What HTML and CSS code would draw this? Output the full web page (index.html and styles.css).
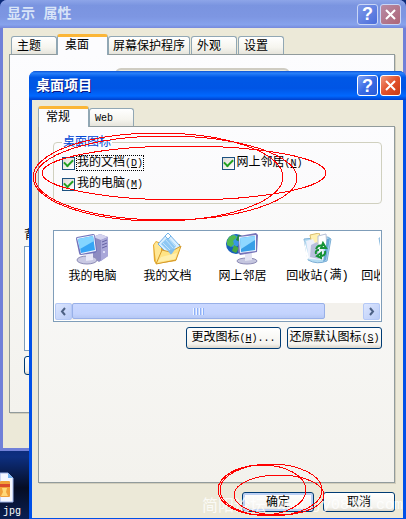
FILE: index.html
```html
<!DOCTYPE html>
<html lang="zh-CN">
<head>
    <meta charset="UTF-8">
    <meta name="viewport" content="width=device-width, initial-scale=1.0">
    <title>显示 属性</title>
    <link rel="stylesheet" href="styles.css">
</head>
<body>
<div class="desktop">
    <div class="desktop-file">
        <svg width="14" height="31" viewBox="0 0 14 31">
            <path d="M0 1H8L13 6V30H0Z" fill="#f4f7ff" stroke="#9db4ea"/>
            <path d="M8 1V6H13Z" fill="#79b4ef"/>
            <rect x="0" y="9" width="10" height="16" rx="1" fill="#f0a03a"/>
            <rect x="0" y="12" width="10" height="3" fill="#d9482b"/>
            <path d="M2 16H7L6 20L8 24H1L3 20Z" fill="#ffd878"/>
        </svg>
        <span>jpg</span>
    </div>

    <!-- Свойства экрана -->
    <section class="window window-back">
        <header class="titlebar">
            <h1>显示 属性</h1>
            <button class="title-btn" type="button" aria-label="帮助">?</button>
            <button class="title-btn close" type="button" aria-label="关闭">
                <svg width="13" height="13" viewBox="0 0 13 13"><path d="M2 2L11 11M11 2L2 11"/></svg>
            </button>
        </header>
        <div class="window-body">
            <nav class="tabs">
                <button class="tab" type="button">主题</button>
                <button class="tab active" type="button">桌面</button>
                <button class="tab" type="button">屏幕保护程序</button>
                <button class="tab" type="button">外观</button>
                <button class="tab" type="button">设置</button>
            </nav>
            <div class="panel">
                <div class="monitor"></div>
                <div class="background-label">背景</div>
                <div class="background-list"></div>
                <button class="btn" type="button" aria-label="自定义桌面"></button>
            </div>
        </div>
    </section>

    <!-- Элементы рабочего стола -->
    <section class="window window-front">
        <header class="titlebar">
            <h2>桌面项目</h2>
            <button class="title-btn" type="button" aria-label="帮助">?</button>
            <button class="title-btn close" type="button" aria-label="关闭">
                <svg width="13" height="13" viewBox="0 0 13 13"><path d="M2 2L11 11M11 2L2 11"/></svg>
            </button>
        </header>
        <div class="window-body">
            <nav class="tabs">
                <button class="tab active" type="button">常规</button>
                <button class="tab" type="button"><span class="key">Web</span></button>
            </nav>
            <div class="panel">
                <fieldset class="group">
                    <legend>桌面图标</legend>
                    <div class="checks">
                        <div class="check">
                            <input type="checkbox" id="docs" checked>
                            <label class="focused" for="docs">我的文档<span class="key">(<u>D</u>)</span></label>
                        </div>
                        <div class="check">
                            <input type="checkbox" id="network" checked>
                            <label for="network">网上邻居<span class="key">(<u>N</u>)</span></label>
                        </div>
                        <div class="check">
                            <input type="checkbox" id="computer" checked>
                            <label for="computer">我的电脑<span class="key">(<u>M</u>)</span></label>
                        </div>
                    </div>
                </fieldset>

                <div class="icon-box">
                    <ul class="icon-list">
                        <li>
                            <svg width="32" height="32" viewBox="0 0 32 32">
                                <path d="M17 4L24 1L32 4V23L23 29L17 25Z" fill="#8d8cc2"/>
                                <path d="M17 4L24 1L32 4L25 7Z" fill="#d4d3ef"/>
                                <path d="M25 7L32 4V23L25 28Z" fill="#a9a7d9"/>
                                <path d="M26 9L31 7M26 12L31 10M26 15L31 13" stroke="#6562a4"/>
                                <circle cx="28" cy="19" r="1" fill="#eeeeff"/>
                                <ellipse cx="11" cy="27" rx="10" ry="4" fill="#c9c9e3" stroke="#8c8bb5"/>
                                <path d="M10 20L17 19L17 27L10 28Z" fill="#e8e8f7"/>
                                <path d="M1 4L17 1Q19 1 19 3L21 17Q21 19 19 20L5 22Q3 22 3 20L0 6Q0 4 1 4Z" fill="#7073bb"/>
                                <path d="M1 5L18 2L20 18L5 21Z" fill="#eff5ff"/>
                                <path d="M2 6L17 3L19 17L5 20Z" fill="#36a5f5"/>
                                <path d="M2 6L17 3L18 8L4 16Z" fill="#83d5ff"/>
                            </svg>
                            我的电脑
                        </li>
                        <li>
                            <svg width="32" height="32" viewBox="0 0 32 32">
                                <path d="M2 12L5 8L10 10L29 11L25 28L5 31L3 28Z" fill="#e5a92d"/>
                                <path d="M3 12L5 9L10 11V24L5 30Z" fill="#ffe795"/>
                                <path d="M17 0L29 13L20 24L7 11Z" fill="#d9efff" stroke="#72aee6"/>
                                <path d="M17 4L25 13L19 20L10 11Z" fill="#8ec7f3"/>
                                <path d="M15 7L22 15M12 10L19 17M18 6L24 13" stroke="#c2e3fb"/>
                                <path d="M17 0L20 3L17 6L14 3Z" fill="#ffffff" stroke="#73b6ea"/>
                                <path d="M5 31L11 17L19 19L30 13L25 27Z" fill="#ffe486" stroke="#d69b2b"/>
                                <path d="M17 18L25 15L20 22Z" fill="#80bce9"/>
                                <path d="M10 24L26 20L24 26L7 29Z" fill="#fff0ae"/>
                            </svg>
                            我的文档
                        </li>
                        <li>
                            <svg width="32" height="32" viewBox="0 0 32 32">
                                <circle cx="10" cy="11" r="10" fill="#1760ba"/>
                                <circle cx="8" cy="8" r="6" fill="#3796e5"/>
                                <path d="M1 8Q3 2 8 2L11 4L7 8L8 11L5 14L1 12Z" fill="#51b950"/>
                                <path d="M12 2L17 3L20 8L14 9L10 7Z" fill="#218c39"/>
                                <path d="M8 12L13 15L10 20L6 18Z" fill="#48a741"/>
                                <ellipse cx="21" cy="28" rx="10" ry="3" fill="#c5c6df" stroke="#8c8bb5"/>
                                <path d="M19 20L26 20V27L19 28Z" fill="#e3e3f2"/>
                                <path d="M13 3L30 0L32 2L31 19L14 22L12 19Z" fill="#7774b9"/>
                                <path d="M13 4L30 2V18L14 20Z" fill="#eaf4ff"/>
                                <path d="M14 5L29 3V17L15 19Z" fill="#389fe7"/>
                                <path d="M14 5L29 3V7L15 16Z" fill="#8fd8ff"/>
                            </svg>
                            网上邻居
                        </li>
                        <li>
                            <svg width="32" height="32" viewBox="0 0 32 32">
                                <path d="M3 6L27 4L30 6L26 28Q16 32 7 27Z" fill="#b4dcf2" stroke="#7caed5"/>
                                <path d="M9 2L18 0L21 9L11 12Z" fill="#fff1b1" stroke="#d9bd70"/>
                                <path d="M17 3L25 1L26 14L17 15Z" fill="#ffffff" stroke="#b6bfd6"/>
                                <path d="M5 8L12 6L16 14L22 10L23 27L8 26Z" fill="#edf1fc"/>
                                <path d="M10 12L16 9L18 26L9 24Z" fill="#b9bfdd"/>
                                <path d="M3 6L8 24L7 27Q5 25 5 21Z" fill="#ffffff"/>
                                <path d="M26 6L29 5L25 27L22 29Z" fill="#6ba8d4"/>
                                <path d="M15 16Q17 11 22 13M22 10L25 15H20ZM15 21Q14 17 18 17M24 18Q25 23 19 23M20 20V25L16 23Z" fill="none" stroke="#159235" stroke-width="2"/>
                            </svg>
                            回收站<span class="key">(满)</span>
                        </li>
                        <li>
                            <svg width="32" height="32" viewBox="0 0 32 32">
                                <path d="M3 5L27 3L30 6L26 28Q16 32 7 27Z" fill="#c7e5f6" stroke="#87b9df"/>
                                <path d="M4 6L27 5L23 9L7 10Z" fill="#f2faff"/>
                            </svg>
                            回收站<span class="key">(空)</span>
                        </li>
                    </ul>
                    <div class="scrollbar">
                        <button class="scroll-btn" type="button" aria-label="向左">
                            <svg width="9" height="9" viewBox="0 0 9 9"><path d="M6 1L3 4.500L6 8"/></svg>
                        </button>
                        <div class="scroll-track">
                            <div class="scroll-thumb"><i></i><i></i><i></i><i></i></div>
                        </div>
                        <button class="scroll-btn" type="button" aria-label="向右">
                            <svg width="9" height="9" viewBox="0 0 9 9"><path d="M3 1L6 4.500L3 8"/></svg>
                        </button>
                    </div>
                </div>

                <div class="icon-actions">
                    <button class="btn" type="button">更改图标<span class="key">(<u>H</u>)...</span></button>
                    <button class="btn" type="button">还原默认图标<span class="key">(<u>S</u>)</span></button>
                </div>
            </div>
            <footer class="dialog-actions">
                <button class="btn default" type="button">确定</button>
                <button class="btn" type="button">取消</button>
            </footer>
        </div>
    </section>

    <div class="watermark"><span>简阳论坛</span><span class="site">www.jy0832.com</span></div>

    <svg class="marks" width="406" height="519" viewBox="0 0 406 519">
        <ellipse cx="158" cy="177" rx="125" ry="44"/>
        <ellipse cx="166" cy="178" rx="131" ry="42"/>
        <ellipse cx="184" cy="173" rx="142" ry="27"/>
        <ellipse cx="262" cy="490" rx="44" ry="25"/>
        <ellipse cx="271" cy="490" rx="51" ry="26"/>
        <ellipse cx="279" cy="495" rx="45" ry="20"/>
    </svg>
</div>
</body>
</html>
```
FILE: styles.css
```css
:root {
    --face: #ece9d8;
    --line: #919b9c;
    --field: #7f9db9;
    --navy: #003c74;
}

* {
    box-sizing: border-box;
}

body {
    margin: 0;
    font-family: "Liberation Sans", "Noto Sans CJK SC", sans-serif;
    font-size: 12px;
    line-height: 14px;
    color: #000;
}

h1, h2, ul {
    margin: 0;
    padding: 0;
}

button {
    font: inherit;
    color: inherit;
    padding: 0;
}

.key {
    font-family: "Liberation Mono", "Noto Sans CJK SC", monospace;
    font-size: 10px;
}

.desktop {
    position: relative;
    height: 100vh;
    min-height: 519px;
    overflow: hidden;
    background: linear-gradient(#0b2a78 86%, #0d2f80 88%, #050d24 94%, #0a1f52);
}

.desktop-file {
    position: absolute;
    left: 0;
    top: 472px;
    display: flex;
    flex-direction: column;
    gap: 2px;
    color: #fff;
    font-family: "Liberation Mono", monospace;
}

.desktop-file span {
    padding-left: 3px;
    font-size: 10px;
}

/* окна */
.window {
    position: absolute;
    display: flex;
    flex-direction: column;
    border-radius: 7px 7px 0 0;
    overflow: hidden;
}

.window-back {
    inset: 0 0 68px 0;
    background: #7080d8;
}

.window-front {
    inset: 71px 0 0 29px;
    background: #0050e8;
}

.titlebar {
    display: flex;
    align-items: center;
    gap: 2px;
    height: 28px;
    padding: 0 5px 0 7px;
    background: linear-gradient(#8da5e8, #7a94e0 20%, #7d96e2 60%, #86a2ec 88%, #7689dc);
}

.window-front .titlebar {
    height: 29px;
    background: linear-gradient(#0a4fd0, #2a82fb 7%, #0058e6 22%, #0055e5 60%, #0068ff 86%, #0040cc);
}

.titlebar h1,
.titlebar h2 {
    flex: 1;
    font-family: "Liberation Mono", "Noto Sans CJK SC", monospace;
    font-size: 14px;
    line-height: 18px;
    font-weight: 700;
    color: #d8e4f8;
}

.titlebar h2 {
    color: #fff;
    text-shadow: 1px 1px #0a1883;
}

.title-btn {
    display: flex;
    align-items: center;
    justify-content: center;
    width: 21px;
    height: 21px;
    border: 1px solid #fff;
    border-radius: 3px;
    background: linear-gradient(135deg, #7ea2f4, #3a6be4 50%, #2a5bd8);
    color: #fff;
    font-size: 18px;
    line-height: 18px;
    font-weight: 700;
}

.title-btn svg {
    fill: none;
    stroke: #fff;
    stroke-width: 2;
}

.title-btn.close {
    background: linear-gradient(135deg, #f09a80, #e2512b 50%, #c93c14);
}

.window-back .title-btn {
    border-color: #c9d6f6;
    background: linear-gradient(135deg, #7d98e8, #4b6ddb);
}

.window-back .title-btn.close {
    background: linear-gradient(135deg, #b78ba5, #ae6577);
}

.window-body {
    flex: 1;
    display: flex;
    flex-direction: column;
    margin: 0 3px 3px;
    padding: 6px 8px 0 6px;
    background: var(--face);
}

.window-front .window-body {
    margin-bottom: 1px;
}

.window-back .window-body {
    padding-bottom: 35px;
}

/* вкладки */
.tabs {
    display: flex;
    align-items: flex-end;
    height: 20px;
}

.tab {
    height: 18px;
    padding: 0 15px 0 5px;
    border: 1px solid #91a7b4;
    border-bottom: 0;
    border-radius: 3px 3px 0 0;
    background: linear-gradient(#fff, #f6f5ef 60%, #e6e4dc);
}

.tab.active {
    z-index: 1;
    height: 21px;
    margin-bottom: -1px;
    padding: 0 18px 3px 7px;
    border-top: 3px solid #fbb637;
    background: #fcfcfe;
}

.window-front .tab:last-child {
    padding-right: 20px;
}

.window-back .tabs {
    padding-left: 2px;
}

.window-back .tab:nth-child(3) {
    padding: 0 4px;
}

.window-back .tab:nth-child(n+4) {
    margin-left: 1px;
}

.panel {
    flex: 1;
    border: 1px solid var(--line);
    background: linear-gradient(#fcfcfe, #f3f2ed);
    box-shadow: 1px 1px #d2cebc;
}

.window-back .panel {
    padding: 13px 14px 0;
}

.window-front .panel {
    padding: 9px 12px 0 14px;
}

.monitor {
    width: 175px;
    height: 158px;
    margin: 0 auto;
    border: 2px solid #cfccc2;
    border-radius: 6px;
    background: #ece9d8;
}

.background-label {
    padding: 2px 0 4px;
}

.background-list {
    height: 105px;
    margin-bottom: 5px;
    border: 1px solid var(--field);
    background: #fff;
}

.btn {
    height: 22px;
    border: 1px solid var(--navy);
    border-radius: 3px;
    background: linear-gradient(#fff, #f4f3ee 80%, #dcd6ca);
    white-space: nowrap;
}

.window-back .btn {
    width: 90px;
    height: 19px;
}

/* флажки */
.group {
    height: 68px;
    min-width: 0;
    margin: 0;
    padding: 7px 8px 0;
    border: 1px solid #d0d0bf;
    border-radius: 4px;
}

.group legend {
    padding: 0 1px;
    line-height: 12px;
    color: #0046d5;
}

.checks {
    display: grid;
    grid-template-columns: 1fr 1fr;
    gap: 5px 0;
}

.check {
    display: flex;
    align-items: center;
    gap: 1px;
}

.check:nth-child(2) {
    padding-left: 4px;
}

.check input {
    appearance: none;
    display: grid;
    place-items: center;
    width: 13px;
    height: 13px;
    margin: 0;
    border: 1px solid #1c5180;
    background: linear-gradient(135deg, #dcdcd7, #fff);
}

.check input:checked::before {
    content: "";
    width: 7px;
    height: 4px;
    margin-bottom: 2px;
    border: solid #21a121;
    border-width: 0 0 2px 2px;
    transform: rotate(-45deg);
}

.check label {
    padding: 0 1px;
    white-space: nowrap;
}

.check .focused {
    outline: 1px dotted #000;
    outline-offset: -1px;
}

/* список значков */
.icon-box {
    display: flex;
    flex-direction: column;
    height: 92px;
    margin-top: 26px;
    padding: 1px;
    border: 1px solid var(--field);
    background: #fff;
}

.icon-list {
    flex: 1;
    display: flex;
    overflow: hidden;
    list-style: none;
}

.icon-list li {
    flex: 0 0 75px;
    display: grid;
    grid-template-columns: auto auto;
    align-content: start;
    justify-content: center;
    row-gap: 4px;
    padding-top: 1px;
    white-space: nowrap;
}

.icon-list svg {
    grid-column: 1 / -1;
    justify-self: center;
}

.icon-list .key {
    font-size: 12px;
}

.scrollbar {
    display: flex;
    height: 17px;
    background: #f3f1ec;
}

.scroll-btn {
    display: grid;
    place-items: center;
    width: 17px;
    border: 1px solid #b4c8f6;
    border-radius: 2px;
    background: linear-gradient(135deg, #dce6fe, #b9cbf7);
}

.scroll-btn svg {
    fill: none;
    stroke: #4d6185;
    stroke-width: 2;
}

.scroll-track {
    flex: 1;
}

.scroll-thumb {
    display: flex;
    align-items: center;
    justify-content: center;
    gap: 1px;
    width: 87%;
    height: 16px;
    border: 1px solid #98b0e8;
    border-radius: 2px;
    background: linear-gradient(#cad8ff, #c3d3fd 70%, #b6c8f4);
}

.scroll-thumb i {
    width: 2px;
    height: 7px;
    border-left: 1px solid #eef4fe;
    border-right: 1px solid #8cb0f8;
}

.icon-actions {
    display: flex;
    justify-content: flex-end;
    gap: 6px;
    margin-top: 5px;
}

.icon-actions .btn {
    width: 95px;
}

.dialog-actions {
    display: flex;
    justify-content: flex-end;
    gap: 9px;
    padding: 9px 0 6px;
}

.dialog-actions .btn {
    width: 72px;
    height: 20px;
}

.btn.default {
    box-shadow: inset 0 0 0 2px #bcd0f4;
}

/* пометки поверх окон */
.watermark {
    position: absolute;
    right: 3px;
    bottom: 4px;
    display: flex;
    gap: 11px;
    color: rgba(255, 255, 255, 0.8);
    font-size: 16px;
    line-height: 18px;
    pointer-events: none;
}

.watermark .site {
    font-family: "Liberation Mono", monospace;
    font-size: 15px;
}

.marks {
    position: absolute;
    left: 0;
    top: 0;
    fill: none;
    stroke: #f00;
    shape-rendering: crispEdges;
    pointer-events: none;
}
```
